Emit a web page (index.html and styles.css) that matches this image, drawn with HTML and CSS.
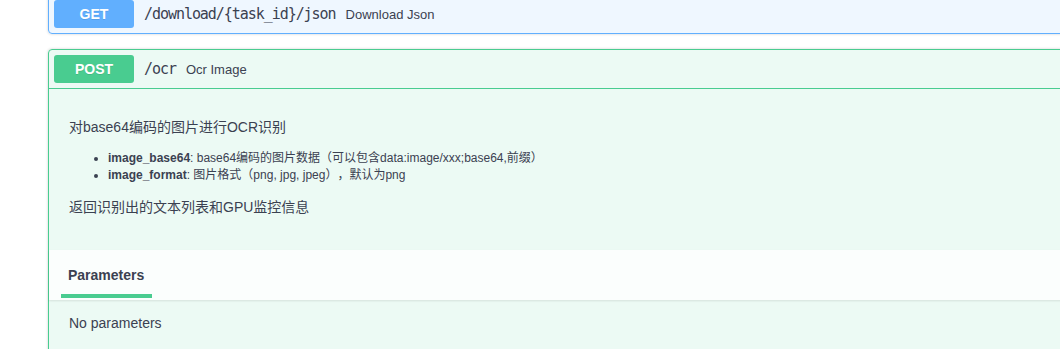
FILE: index.html
```html
<!DOCTYPE html>
<html lang="zh">
<head>
<meta charset="utf-8">
<title>API</title>
<link rel="stylesheet" href="styles.css">
</head>
<body>
<div class="wrap">
  <div class="opblock opblock-get">
    <div class="summary">
      <span class="method">GET</span>
      <span class="path">/download/{task_id}/json</span>
      <span class="summary-desc">Download Json</span>
    </div>
  </div>

  <div class="opblock opblock-post">
    <div class="summary summary-open">
      <span class="method">POST</span>
      <span class="path">/ocr</span>
      <span class="summary-desc">Ocr Image</span>
    </div>
    <div class="description">
      <p>对base64编码的图片进行OCR识别</p>
      <ul>
        <li><strong>image_base64</strong>: base64编码的图片数据（可以包含data:image/xxx;base64,前缀）</li>
        <li><strong>image_format</strong>: 图片格式（png, jpg, jpeg），默认为png</li>
      </ul>
      <p>返回识别出的文本列表和GPU监控信息</p>
    </div>
    <div class="section-header">
      <span class="tab-item">Parameters</span>
    </div>
    <div class="params-body">
      <p>No parameters</p>
    </div>
  </div>
</div>
</body>
</html>
```

FILE: styles.css
```css
html, body {
  margin: 0;
  padding: 0;
  overflow: hidden;
  background: #fff;
}

body {
  font-family: "Liberation Sans", "Noto Sans CJK SC", sans-serif;
  color: #3b4151;
  text-spacing-trim: space-all;
}

.wrap {
  width: 1100px;
  margin-top: -6px;
  padding-left: 48px;
}

.opblock {
  border: 1px solid;
  border-radius: 4px;
  margin-bottom: 15px;
  box-shadow: 0 0 3px rgba(0, 0, 0, 0.19);
}

.opblock-get {
  background: rgba(97, 175, 254, 0.1);
  border-color: #61affe;
}

.opblock-post {
  background: rgba(73, 204, 144, 0.1);
  border-color: #49cc90;
}

.summary {
  display: flex;
  align-items: center;
  padding: 5px;
}

.summary-open {
  border-bottom: 1px solid #49cc90;
}

.method {
  min-width: 80px;
  padding: 6px 0;
  line-height: 16px;
  text-align: center;
  font-size: 14px;
  font-weight: 700;
  color: #fff;
  border-radius: 3px;
  text-shadow: 0 1px 0 rgba(0, 0, 0, 0.1);
}

.opblock-get .method { background: #61affe; }
.opblock-post .method { background: #49cc90; }

.path {
  padding: 0 10px;
  font-family: "DejaVu Sans Mono", monospace;
  font-size: 15px;
  letter-spacing: -1.05px;
  color: #3b4151;
}

.summary-desc {
  font-size: 13px;
  color: #3b4151;
}

.description {
  padding: 15px 20px;
  margin-bottom: 5px;
}

.description p {
  margin: 14px 0;
  font-size: 14px;
  line-height: 18px;
}

.description ul {
  margin: 14px 0;
  padding-left: 39px;
  font-size: 12px;
  line-height: 17px;
}

.section-header {
  height: 50px;
  box-sizing: border-box;
  padding: 0 20px 0 11.5px;
  display: flex;
  align-items: flex-end;
  background: rgba(255, 255, 255, 0.8);
  box-shadow: 0 1px 2px rgba(0, 0, 0, 0.1);
}

.tab-item {
  font-size: 14px;
  font-weight: 700;
  line-height: 20px;
  padding: 0 7.5px 9px;
  border-bottom: 4px solid #49cc90;
  margin-bottom: 2px;
}

.params-body {
  padding: 15px 20px 60px;
}

.params-body p {
  margin: 0;
  font-size: 14px;
  line-height: 16px;
}
```
